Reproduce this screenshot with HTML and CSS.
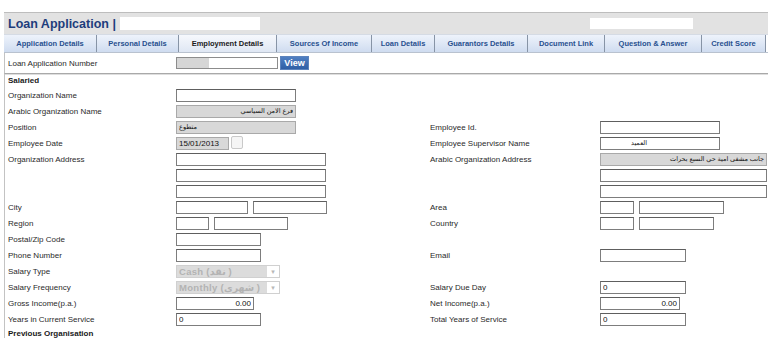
FILE: index.html
```html
<!DOCTYPE html>
<html lang="en">
<head>
    <meta charset="UTF-8">
    <meta name="viewport" content="width=device-width, initial-scale=1.0">
    <title>Loan Application</title>
    <link rel="stylesheet" href="styles.css">
</head>
<body>

    <div class="page">
        <!-- Header -->
        <div class="header">
            <span class="title">Loan Application |</span>
            <span class="header-box"></span>
            <span class="header-box small"></span>
        </div>

        <!-- Tabs -->
        <div class="tabs">
            <div class="tab">Application Details</div>
            <div class="tab">Personal Details</div>
            <div class="tab active">Employment Details</div>
            <div class="tab">Sources Of Income</div>
            <div class="tab">Loan Details</div>
            <div class="tab">Guarantors Details</div>
            <div class="tab">Document Link</div>
            <div class="tab">Question &amp; Answer</div>
            <div class="tab">Credit Score</div>
        </div>

        <!-- Loan number -->
        <div class="number-row">
            <label class="label">Loan Application Number</label>
            <span class="number-input"><span class="number-fill"></span></span>
            <button class="view-btn">View</button>
        </div>

        <!-- Employment form -->
        <div class="form">
            <div class="section">Salaried</div>

            <div class="row">
                <label class="label">Organization Name</label>
                <div class="cell"><input class="w120" type="text"></div>
                <span></span><span></span>
            </div>
            <div class="row">
                <label class="label">Arabic Organization Name</label>
                <div class="cell"><input class="w120 ro rtl" type="text" value="فرع الامن السياسي" readonly></div>
                <span></span><span></span>
            </div>
            <div class="row">
                <label class="label">Position</label>
                <div class="cell"><input class="w120 ro ar" type="text" value="متطوع" readonly></div>
                <label class="label">Employee Id.</label>
                <div class="cell"><input class="w120" type="text"></div>
            </div>
            <div class="row">
                <label class="label">Employee Date</label>
                <div class="cell">
                    <input class="w53 ro" type="text" value="15/01/2013" readonly>
                    <span class="date-btn"></span>
                </div>
                <label class="label">Employee Supervisor Name</label>
                <div class="cell"><input class="w120 ar pad-ar" type="text" value="العميد"></div>
            </div>
            <div class="row">
                <label class="label">Organization Address</label>
                <div class="cell"><input class="w150" type="text"></div>
                <label class="label">Arabic Organization Address</label>
                <div class="cell"><input class="w167 ro rtl" type="text" value="جانب مشفى امية حي السبع بحرات" readonly></div>
            </div>
            <div class="row">
                <span></span>
                <div class="cell"><input class="w150" type="text"></div>
                <span></span>
                <div class="cell"><input class="w167" type="text"></div>
            </div>
            <div class="row">
                <span></span>
                <div class="cell"><input class="w150" type="text"></div>
                <span></span>
                <div class="cell"><input class="w167" type="text"></div>
            </div>
            <div class="row">
                <label class="label">City</label>
                <div class="cell"><input class="w72" type="text"><input class="w74" type="text"></div>
                <label class="label">Area</label>
                <div class="cell"><input class="w34" type="text"><input class="w85" type="text"></div>
            </div>
            <div class="row">
                <label class="label">Region</label>
                <div class="cell"><input class="w33" type="text"><input class="w74" type="text"></div>
                <label class="label">Country</label>
                <div class="cell"><input class="w34" type="text"><input class="w75" type="text"></div>
            </div>
            <div class="row">
                <label class="label">Postal/Zip Code</label>
                <div class="cell"><input class="w85" type="text"></div>
                <span></span><span></span>
            </div>
            <div class="row">
                <label class="label">Phone Number</label>
                <div class="cell"><input class="w85" type="text"></div>
                <label class="label">Email</label>
                <div class="cell"><input class="w86" type="text"></div>
            </div>
            <div class="row">
                <label class="label">Salary Type</label>
                <div class="cell">
                    <div class="select"><span class="select-value">Cash (نقد )</span><span class="select-arrow">&#9662;</span></div>
                </div>
                <span></span><span></span>
            </div>
            <div class="row">
                <label class="label">Salary Frequency</label>
                <div class="cell">
                    <div class="select"><span class="select-value">Monthly (شهري )</span><span class="select-arrow">&#9662;</span></div>
                </div>
                <label class="label">Salary Due Day</label>
                <div class="cell"><input class="w86" type="text" value="0"></div>
            </div>
            <div class="row">
                <label class="label">Gross Income(p.a.)</label>
                <div class="cell"><input class="w78 num" type="text" value="0.00"></div>
                <label class="label">Net Income(p.a.)</label>
                <div class="cell"><input class="w80 num" type="text" value="0.00"></div>
            </div>
            <div class="row">
                <label class="label">Years in Current Service</label>
                <div class="cell"><input class="w85" type="text" value="0"></div>
                <label class="label">Total Years of Service</label>
                <div class="cell"><input class="w86" type="text" value="0"></div>
            </div>

            <div class="section last">Previous Organisation</div>
        </div>
    </div>

</body>
</html>
```

FILE: styles.css
```css
/* General Styles */
body {
    margin: 0;
    padding: 0;
    font-family: "Liberation Sans", "DejaVu Sans", Arial, sans-serif;
    font-size: 8px;
    color: #222;
    background: #fff;
    overflow: hidden;
}

.page {
    padding-top: 12px;
    padding-left: 4px;
}

/* Header */
.header {
    display: flex;
    align-items: center;
    height: 21px;
    background: #e2e2e2;
    border-top: 1px solid #bdbdbd;
}

.title {
    font-size: 12.5px;
    font-weight: bold;
    color: #1e3d7c;
    padding-left: 4px;
    white-space: pre;
}

.header-box {
    width: 140px;
    height: 13px;
    background: #fff;
    margin-left: 4px;
}

.header-box.small {
    width: 103px;
    height: 11px;
    margin-left: auto;
    margin-right: 75px;
}

/* Tabs */
.tabs {
    display: grid;
    grid-template-columns: 93px 82px 98px 95px 63px 93px 77px 97px 64px;
    height: 17px;
    border-top: 1px solid #d5dbe4;
    border-bottom: 1px solid #b9c2cf;
}

.tab {
    display: flex;
    align-items: center;
    justify-content: center;
    font-weight: bold;
    font-size: 7.5px;
    color: #28508f;
    background: linear-gradient(#eef3fb, #cfdcf0);
    border-right: 1px solid #8794a6;
    white-space: nowrap;
}

.tab.active {
    color: #1a1a1a;
    background: linear-gradient(#f6f8fc, #dfe7f4);
}

/* Loan number row */
.number-row {
    display: flex;
    align-items: center;
    height: 20px;
    padding-left: 3px;
    border-left: 1px solid #c3c3c3;
    border-bottom: 1px solid #a9a9a9;
    box-shadow: 0 1px 0 #dedede;
}

.number-row .label {
    width: 168px;
}

.number-input {
    display: flex;
    width: 102px;
    height: 12px;
    box-sizing: border-box;
    border: 1px solid #8c8c8c;
    background: #fff;
}

.number-fill {
    width: 32px;
    background: #d6d6d6;
}

.view-btn {
    margin-left: 2px;
    width: 29px;
    height: 14px;
    padding: 0;
    border: 1px solid #5b83bd;
    background: linear-gradient(#4f7fc2, #2f5fa5);
    color: #fff;
    font-family: inherit;
    font-size: 9px;
    font-weight: bold;
    line-height: 12px;
}

/* Form */
.form {
    border-left: 1px solid #c3c3c3;
    padding-left: 3px;
    padding-top: 1px;
}

.section {
    height: 12px;
    line-height: 12px;
    font-weight: bold;
    color: #1a1a1a;
}

.section.last {
    height: 14px;
    line-height: 14px;
}

.row {
    display: grid;
    grid-template-columns: 168px 254px 170px 1fr;
    height: 16px;
    align-items: center;
}

.label {
    white-space: nowrap;
    color: #2a2a2a;
}

.cell {
    display: flex;
    align-items: center;
    gap: 5px;
}

input[type="text"] {
    height: 13px;
    box-sizing: border-box;
    margin: 0;
    padding: 0 2px;
    border: 1px solid #7d7d7d;
    border-top-color: #5e5e5e;
    background: #fff;
    font-family: inherit;
    font-size: 8px;
    color: #111;
    outline: none;
}

input.ro {
    background: #d8d8d8;
    border-color: #a9a9a9;
}

input.rtl {
    direction: rtl;
    text-align: right;
    font-size: 6.5px;
}

input.ar {
    font-size: 6.5px;
}

input.pad-ar {
    padding-left: 30px;
}

input.num {
    text-align: right;
}

.w33 { width: 33px; }
.w34 { width: 34px; }
.w53 { width: 53px; }
.w72 { width: 72px; }
.w74 { width: 74px; }
.w75 { width: 75px; }
.w78 { width: 78px; }
.w80 { width: 80px; }
.w85 { width: 85px; }
.w86 { width: 86px; }
.w120 { width: 120px; }
.w150 { width: 150px; }
.w167 { width: 167px; }

.date-btn {
    width: 12px;
    height: 13px;
    box-sizing: border-box;
    margin-left: -3px;
    margin-top: -2px;
    border: 1px solid #c9c9c9;
    border-radius: 2px;
    background: #f5f5f5;
}

/* Disabled select */
.select {
    display: flex;
    width: 104px;
    height: 13px;
    box-sizing: border-box;
    border: 1px solid #d0d0d0;
    background: #fff;
}

.select-value {
    flex: 1;
    background: #dcdcdc;
    color: #b3b3b3;
    font-size: 9.5px;
    font-weight: bold;
    line-height: 11px;
    padding-left: 2px;
    letter-spacing: 0.3px;
    white-space: nowrap;
    overflow: hidden;
}

.select-arrow {
    width: 12px;
    text-align: center;
    color: #b8b8b8;
    font-size: 7px;
    line-height: 11px;
}
```
